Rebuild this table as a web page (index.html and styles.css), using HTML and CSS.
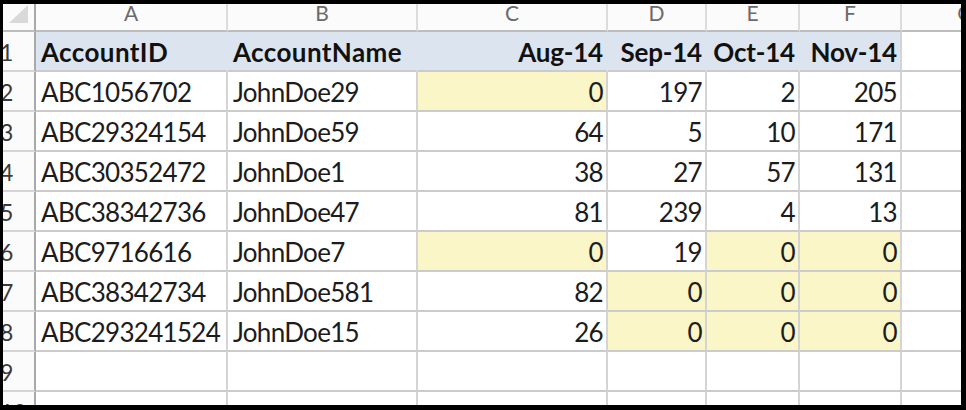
FILE: index.html
```html
<!DOCTYPE html>
<html>
<head>
<meta charset="utf-8">
<link rel="stylesheet" href="styles.css">
</head>
<body>
<div class="sheet">
  <div class="grid">
    <div class="c corner"><svg width="22" height="20" viewBox="0 0 22 20"><polygon points="21,1 21,19 2,19" fill="#d9d9d9"/></svg></div>
    <div class="c ch">A</div><div class="c ch">B</div><div class="c ch">C</div><div class="c ch">D</div><div class="c ch">E</div><div class="c ch">F</div><div class="c ch">G</div>

    <div class="c rh"><span>1</span></div>
    <div class="c h">AccountID</div><div class="c h">AccountName</div><div class="c h num">Aug-14</div><div class="c h num">Sep-14</div><div class="c h num">Oct-14</div><div class="c h num hl">Nov-14</div><div class="c"></div>

    <div class="c rh"><span>2</span></div>
    <div class="c">ABC1056702</div><div class="c">JohnDoe29</div><div class="c num y">0</div><div class="c num">197</div><div class="c num">2</div><div class="c num">205</div><div class="c"></div>

    <div class="c rh"><span>3</span></div>
    <div class="c">ABC29324154</div><div class="c">JohnDoe59</div><div class="c num">64</div><div class="c num">5</div><div class="c num">10</div><div class="c num">171</div><div class="c"></div>

    <div class="c rh"><span>4</span></div>
    <div class="c">ABC30352472</div><div class="c">JohnDoe1</div><div class="c num">38</div><div class="c num">27</div><div class="c num">57</div><div class="c num">131</div><div class="c"></div>

    <div class="c rh"><span>5</span></div>
    <div class="c">ABC38342736</div><div class="c">JohnDoe47</div><div class="c num">81</div><div class="c num">239</div><div class="c num">4</div><div class="c num">13</div><div class="c"></div>

    <div class="c rh"><span>6</span></div>
    <div class="c">ABC9716616</div><div class="c">JohnDoe7</div><div class="c num y">0</div><div class="c num">19</div><div class="c num y">0</div><div class="c num y">0</div><div class="c"></div>

    <div class="c rh"><span>7</span></div>
    <div class="c">ABC38342734</div><div class="c">JohnDoe581</div><div class="c num">82</div><div class="c num y">0</div><div class="c num y">0</div><div class="c num y">0</div><div class="c"></div>

    <div class="c rh"><span>8</span></div>
    <div class="c">ABC293241524</div><div class="c">JohnDoe15</div><div class="c num">26</div><div class="c num y">0</div><div class="c num y">0</div><div class="c num y">0</div><div class="c"></div>

    <div class="c rh"><span>9</span></div>
    <div class="c"></div><div class="c"></div><div class="c"></div><div class="c"></div><div class="c"></div><div class="c"></div><div class="c"></div>

    <div class="c rh"><span>10</span></div>
    <div class="c"></div><div class="c"></div><div class="c"></div><div class="c"></div><div class="c"></div><div class="c"></div><div class="c"></div>
  </div>
</div>
</body>
</html>
```
FILE: styles.css
```css
body {
  margin: 0;
  background: #000;
}
.sheet {
  margin: 4px 0 0 3px;
  width: 958px;
  height: 401px;
  overflow: hidden;
  background: #fff;
  font-family: Lato, "Open Sans", sans-serif;
}
.grid {
  display: grid;
  grid-template-columns: 33px 192px 190px 190px 99px 93px 102px 128px;
  grid-template-rows: 28px repeat(10, 40px);
}
.c {
  box-sizing: border-box;
  border-right: 2px solid #d4d4d4;
  border-bottom: 2px solid #cbcbcb;
  display: flex;
  align-items: flex-end;
  padding: 0 3px 3px 5px;
  font-size: 26px;
  line-height: 30px;
  letter-spacing: -0.7px;
  color: #1c1c1c;
  white-space: nowrap;
  background: #fff;
}
.num {
  justify-content: flex-end;
}
.y {
  background: #faf6c8;
}
.h {
  background: #dce5ef;
  font-weight: 700;
  color: #111;
  border-right-color: #dce5ef;
  letter-spacing: 0.4px;
}
.h.num {
  letter-spacing: -0.2px;
}
.h.hl {
  border-right-color: #d4d4d4;
}
.ch {
  background: #fbfbfb;
  justify-content: center;
  font-size: 21px;
  line-height: 24px;
  letter-spacing: 0;
  color: #6a6a6a;
  padding: 0 0 5px 0;
  border-right-color: #dcdcdc;
  border-bottom-color: #bdbdbd;
}
.corner {
  background: #fbfbfb;
  border-right-color: #a9a9a9;
  border-bottom-color: #bdbdbd;
  padding: 0 5px 6px 0;
  justify-content: flex-end;
}
.corner svg {
  display: block;
}
.rh {
  background: #fbfbfb;
  border-right-color: #a9a9a9;
  border-bottom-color: #d4d4d4;
  padding: 0 0 3px 0;
  font-size: 23px;
  letter-spacing: 0;
  color: #3a3a3a;
  overflow: hidden;
}
.rh span {
  margin-left: -3px;
}
```
